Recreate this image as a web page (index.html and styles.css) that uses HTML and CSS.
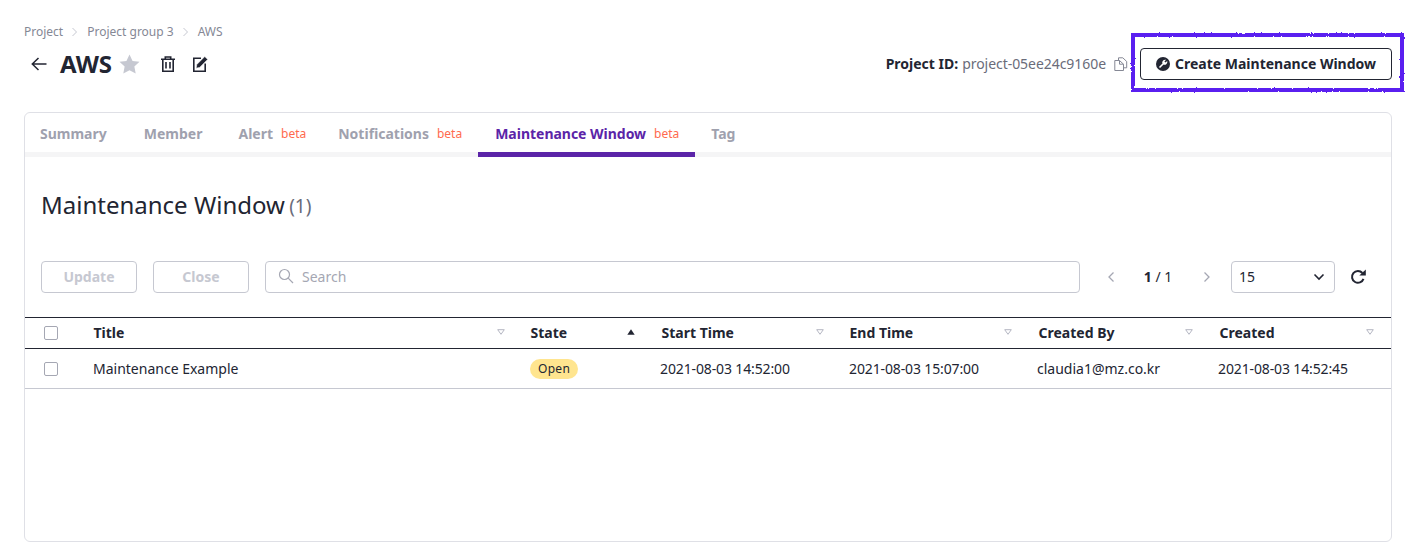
FILE: index.html
```html
<!DOCTYPE html>
<html lang="en">
<head>
<meta charset="utf-8">
<title>Maintenance Window</title>
<link rel="stylesheet" href="styles.css">
</head>
<body>
<svg class="defs" width="0" height="0" aria-hidden="true"><filter id="wobble" x="-5%" y="-10%" width="110%" height="120%" color-interpolation-filters="sRGB"><feTurbulence type="fractalNoise" baseFrequency="0.4" numOctaves="2" seed="7"/><feDisplacementMap in="SourceGraphic" scale="2.4" xChannelSelector="R" yChannelSelector="G"/><feGaussianBlur stdDeviation="0.3"/></filter></svg>
<header class="page-head">
  <nav class="crumbs">
    <span>Project</span>
    <svg class="crumb-sep" viewBox="0 0 8 10"><path d="M1.5 1l4 4-4 4"/></svg>
    <span>Project group 3</span>
    <svg class="crumb-sep" viewBox="0 0 8 10"><path d="M1.5 1l4 4-4 4"/></svg>
    <span>AWS</span>
  </nav>
  <div class="title-row">
    <div class="title-left">
      <svg class="back" viewBox="0 0 16 14"><path d="M15.500 7H1.500M7.500 1L1.300 7l6.200 6"/></svg>
      <h1>AWS</h1>
      <svg class="star" viewBox="0 0 22 21"><path d="M11 .5l3.200 6.800 7.300.9-5.400 5 1.400 7.300L11 17l-6.500 3.500 1.400-7.300-5.400-5 7.300-.9z"/></svg>
      <svg class="tool trash" viewBox="0 0 16 16"><path d="M1 3.300h14M5.300 3.200V1h5.400v2.200M2.800 3.300v11.900h10.400V3.300M6 6v6.500M10 6v6.500"/></svg>
      <svg class="tool edit" viewBox="0 0 16 16"><path d="M9 2.300H1.800v12.900h11.400V7.500"/><path class="fill" d="M4.800 8.500L12.800.5l2.900 2.900-8 8-3.600.8z"/></svg>
    </div>
    <div class="title-right">
      <span class="pid-label">Project ID:</span>
      <span class="pid-value">project-05ee24c9160e</span>
      <svg class="copy" viewBox="0 0 14 14"><path d="M4.500 3.500V.8h4.300l3.900 3.700v6.300H9.800M.8 3.500h4.700L9.500 7.200v6.300H.8zM5.500 3.500v3.700h4"/></svg>
      <div class="cta-wrap">
        <button class="cta">
          <svg class="wrench" viewBox="0 0 14 14"><circle cx="7" cy="7" r="7"/><path d="M3.500 10.500L7 7"/><path class="head" d="M6.300 6.500a3 3 0 0 1 3.800-3.700L8.400 4.500l1.100 1.100 1.700-1.700a3 3 0 0 1-3.700 3.800z"/></svg>
          Create Maintenance Window
        </button>
        <span class="highlight"></span>
      </div>
    </div>
  </div>
</header>
<main class="card">
  <div class="tabs">
    <a class="tab plain">Summary</a>
    <a class="tab plain">Member</a>
    <a class="tab">Alert<sup>beta</sup></a>
    <a class="tab">Notifications<sup>beta</sup></a>
    <a class="tab active">Maintenance Window<sup>beta</sup></a>
    <a class="tab">Tag</a>
  </div>
  <h2 class="heading">Maintenance Window <span>(1)</span></h2>
  <div class="toolbar">
    <button class="ghost">Update</button>
    <button class="ghost">Close</button>
    <label class="search">
      <svg viewBox="0 0 16 16"><circle cx="6.500" cy="6.500" r="5"/><path d="M10.200 10.200L15 15"/></svg>
      <span>Search</span>
    </label>
    <div class="pager">
      <svg class="chev" viewBox="0 0 8 12"><path d="M6.500 1.500L2 6l4.500 4.500"/></svg>
      <span class="pages"><b>1</b> / 1</span>
      <svg class="chev" viewBox="0 0 8 12"><path d="M1.500 1.500L6 6l-4.500 4.500"/></svg>
    </div>
    <div class="select"><span>15</span><svg viewBox="0 0 12 8"><path d="M1.500 1.500L6 6l4.500-4.500"/></svg></div>
    <svg class="refresh" viewBox="0 0 16 16"><path d="M13.500 9.800A5.900 5.900 0 1 1 12.400 4"/><path class="fill" d="M9.300 6.600L15.800 6.600 15.800 .5z"/></svg>
  </div>
  <table class="grid">
    <colgroup>
      <col class="c-check"><col class="c-title"><col class="c-state"><col class="c-start"><col class="c-end"><col class="c-by"><col class="c-created">
    </colgroup>
    <thead>
      <tr>
        <th class="check"><i class="box"></i></th>
        <th><div class="th">Title<svg class="sort" viewBox="0 0 8 6"><path d="M.7.7h6.600L4 5.300z"/></svg></div></th>
        <th><div class="th">State<svg class="sort up" viewBox="0 0 8 6"><path d="M.3 5.700h7.400L4 .3z"/></svg></div></th>
        <th><div class="th">Start Time<svg class="sort" viewBox="0 0 8 6"><path d="M.7.7h6.600L4 5.300z"/></svg></div></th>
        <th><div class="th tight">End Time<svg class="sort" viewBox="0 0 8 6"><path d="M.7.7h6.600L4 5.300z"/></svg></div></th>
        <th><div class="th tight">Created By<svg class="sort" viewBox="0 0 8 6"><path d="M.7.7h6.600L4 5.300z"/></svg></div></th>
        <th><div class="th">Created<svg class="sort" viewBox="0 0 8 6"><path d="M.7.7h6.600L4 5.300z"/></svg></div></th>
      </tr>
    </thead>
    <tbody>
      <tr>
        <td class="check"><i class="box"></i></td>
        <td>Maintenance Example</td>
        <td><span class="badge">Open</span></td>
        <td class="date">2021-08-03 14:52:00</td>
        <td class="date wide">2021-08-03 15:07:00</td>
        <td class="mail">claudia1@mz.co.kr</td>
        <td class="date">2021-08-03 14:52:45</td>
      </tr>
    </tbody>
  </table>
</main>
</body>
</html>
```
FILE: styles.css
```css
* { box-sizing: border-box; }
html, body { margin: 0; height: 100%; }
body {
  background: #fff;
  color: #222532;
  font-family: "Noto Sans", sans-serif;
  font-size: 14px;
  padding: 24px 26px 17px 24px;
  height: 559px;
  overflow: hidden;
  display: flex;
  flex-direction: column;
}
.defs { position: absolute; }
svg { display: block; flex: none; fill: none; stroke: currentColor; }
.page-head { height: 88px; flex: none; }
.crumbs { display: flex; align-items: center; height: 16px; font-size: 12px; line-height: 16px; color: #858895; }
.crumb-sep { width: 8px; height: 10px; margin: 0 8px; stroke: #c6c8d1; stroke-width: 1; }
.title-row { display: flex; justify-content: space-between; align-items: center; height: 32px; margin-top: 8px; }
.title-left, .title-right { display: flex; align-items: center; }
.back { width: 16px; height: 14px; margin-left: 7px; stroke: #222532; stroke-width: 1.500; }
h1 { margin: 0 0 0 13px; font-size: 24px; line-height: 32px; font-weight: 700; }
.star { width: 21px; height: 20px; margin-left: 7px; fill: #c6c8d1; stroke: none; }
.tool { width: 16px; height: 16px; stroke: #222532; stroke-width: 1.600; }
.tool .fill { fill: #222532; stroke: #fff; stroke-width: .6; }
.trash { margin-left: 20px; }
.edit { margin-left: 16px; }
.pid-label { font-weight: 700; font-size: 14px; margin-bottom: 2px; }
.pid-value { color: #6a6c7a; margin: 0 0 2px 4px; font-size: 14px; letter-spacing: -.05px; }
.copy { width: 14px; height: 14px; margin: 0 12px 0 8px; stroke: #858895; stroke-width: 1; }
.cta-wrap { position: relative; }
.cta {
  display: flex; align-items: center; gap: 5px;
  height: 32px; width: 252px; padding: 0 0 0 15px;
  background: #fff; color: #222532;
  border: 1px solid #222532; border-radius: 4px;
  font: 700 14px/20px "Noto Sans", sans-serif;
}
.wrench { width: 14px; height: 14px; }
.wrench circle { fill: #222532; stroke: none; }
.wrench path { stroke: #fff; stroke-width: 1.600; }
.wrench .head { fill: #fff; stroke: none; }
.highlight {
  position: absolute; left: -9px; top: -15px; width: 273px; height: 59px;
  border: 4px solid #5a1ff0;
  filter: url(#wobble);
  pointer-events: none;
}
.card {
  flex: 1; display: flex; flex-direction: column;
  border: 1px solid #dfe0e6; border-radius: 6px;
  background: #fff;
}
.tabs {
  display: flex; flex: none;
  border-bottom: 5px solid #f5f5f6;
  box-sizing: content-box;
  height: 39px;
}
.tab {
  display: flex; align-items: flex-start;
  height: 44px; padding: 10px 16px 0;
  font-size: 14px; line-height: 22px; font-weight: 700;
  color: #9fa1ae;
  white-space: nowrap;
}
.tab.plain { margin-right: 4px; }
.tab:first-child { padding-left: 15px; margin-right: 5px; }
.tab.active { color: #5b24a8; border-bottom: 5px solid #5b24a8; padding: 10px 16px 0 17px; letter-spacing: -.02px; }
.tab sup { font-size: 12px; line-height: 18px; font-weight: 400; color: #ff6a4e; margin: 2px 0 0 8px; vertical-align: baseline; }
.heading { margin: 30px 0 0 16px; font-size: 24px; line-height: 36px; font-weight: 400; color: #222532; }
.heading span { font-size: 19px; color: #6a6c7a; margin-left: -2px; position: relative; top: -1px; }
.toolbar { display: flex; align-items: center; height: 32px; margin: 36px 0 0 16px; }
.ghost {
  width: 96px; height: 32px; margin-right: 16px; padding: 0;
  background: #fff; color: #c6c8d1;
  border: 1px solid #c6c8d1; border-radius: 4px;
  font: 700 14px/20px "Noto Sans", sans-serif;
}
.search {
  display: flex; align-items: center; gap: 8px;
  width: 815px; height: 32px; padding: 0 0 2px 12px;
  border: 1px solid #c6c8d1; border-radius: 4px;
  color: #a5a7b3; font-size: 14px;
}
.search svg { width: 16px; height: 16px; stroke: #a5a7b3; stroke-width: 1.200; }
.pager { display: flex; align-items: center; margin-left: 27px; }
.chev { width: 8px; height: 12px; stroke: #a5a7b3; stroke-width: 1.300; }
.pages { width: 88px; padding: 0 2px 2px 0; text-align: center; font-size: 14px; color: #222532; }
.select {
  display: flex; align-items: center; justify-content: space-between;
  width: 104px; height: 32px; margin-left: 20px; padding: 0 9px 2px 7px;
  border: 1px solid #c6c8d1; border-radius: 4px; font-size: 14px;
}
.select svg { width: 12px; height: 8px; stroke: #222532; stroke-width: 1.600; margin-top: 2px; }
.refresh { width: 16px; height: 16px; margin-left: 15px; stroke: #222532; stroke-width: 2; }
.refresh .fill { fill: #222532; stroke: none; }
.grid {
  width: 100%; margin-top: 24px; table-layout: fixed;
  border-collapse: collapse; font-size: 14px;
}
.c-check { width: 60px; }
.c-title { width: 437px; }
.c-state { width: 131px; }
.c-start { width: 188px; }
.c-end { width: 189px; }
.c-by { width: 181px; }
.grid th {
  height: 31px; padding: 0 0 1px 8px; text-align: left;
  font-weight: 700; border-top: 1px solid #222532; border-bottom: 1px solid #222532;
}
.th { display: flex; align-items: center; justify-content: space-between; padding: 0 17px 0 .5px; line-height: 20px; }
.th.tight { padding-right: 18px; }
.grid td { height: 40px; padding: 0 0 0 8px; border-bottom: 1px solid #c6c8d1; white-space: nowrap; }
.grid .check { padding: 0 0 0 19px; }
.grid .date { padding-left: 7px; letter-spacing: -.13px; }
.grid .date.wide { padding-left: 8px; }
.grid .mail { padding-left: 7px; }
.box { display: block; width: 14px; height: 14px; border: 1px solid #a5a7b3; border-radius: 2px; background: #fff; }
.sort { width: 8px; height: 6px; margin-top: -1px; fill: #fff; stroke: #b4b6c2; stroke-width: 1; }
.sort.up { fill: #222532; stroke: none; margin-right: 1px; }
.badge {
  display: inline-block; height: 20px; padding: 0 8px; border-radius: 10px;
  background: #ffe58f; font-size: 12px; line-height: 20px; letter-spacing: .3px; color: #222532;
  vertical-align: middle;
}
```
